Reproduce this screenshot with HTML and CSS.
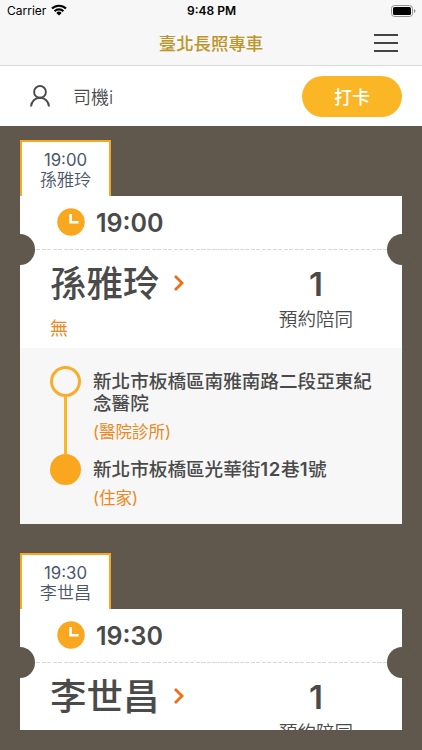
FILE: index.html
```html
<!DOCTYPE html>
<html lang="zh-Hant">
<head>
  <meta charset="UTF-8">
  <meta name="viewport" content="width=device-width, initial-scale=1.0">
  <title>臺北長照專車</title>
  <link rel="stylesheet" href="styles.css">
</head>
<body>
  <header class="header">
    <div class="status-bar">
      <div class="carrier">
        <span>Carrier</span>
        <svg class="wifi" width="16" height="12" viewBox="0 0 16 12">
          <path d="M1 4.6a10 10 0 0 1 14 0M3.6 7.2a6.3 6.3 0 0 1 8.8 0" fill="none" stroke="#000" stroke-width="2.1"/>
          <path d="M8 11.6L5.3 8.9a3.8 3.8 0 0 1 5.4 0z"/>
        </svg>
      </div>
      <span class="clock">9:48 PM</span>
      <svg class="battery" width="25" height="12" viewBox="0 0 25 12">
        <rect x=".5" y=".5" width="21" height="11" rx="3" fill="none" stroke="#929292"/>
        <rect x="2" y="2" width="18" height="8" rx="1.6"/>
        <path d="M23 4v4q1.4-.7 1.4-2T23 4z" fill="#888"/>
      </svg>
    </div>
    <div class="nav">
      <h1 class="nav-title">臺北長照專車</h1>
      <div class="menu-btn"><i></i><i></i><i></i></div>
    </div>
  </header>

  <div class="user-bar">
    <svg class="user-icon" width="20" height="22" viewBox="0 0 20 22" fill="none" stroke="#4a4a4a" stroke-width="1.9">
      <circle cx="10" cy="6.9" r="5.9"/>
      <path d="M1 21.5c.4-5 4-8.7 9-8.7s8.6 3.7 9 8.7"/>
    </svg>
    <span class="user-name">司機i</span>
    <button class="punch-btn">打卡</button>
  </div>

  <main class="list">
    <section class="ticket">
      <div class="tab"><span class="tab-time">19:00</span><span>孫雅玲</span></div>
      <div class="card">
        <div class="card-time">
          <svg class="time-icon" width="28" height="28" viewBox="0 0 28 28">
            <circle cx="14" cy="14" r="13.7" fill="#f9a71f"/>
            <path d="M13.6 6v8.3h8" fill="none" stroke="#fff" stroke-width="2.6"/>
          </svg>
          <span>19:00</span>
        </div>
        <div class="card-info">
          <div class="passenger">
            <div class="passenger-name">
              <span>孫雅玲</span>
              <svg width="12" height="16" viewBox="0 0 12 16"><path d="M2 1l7 7-7 7" fill="none" stroke="#ee6d10" stroke-width="2.8"/></svg>
            </div>
            <p class="note">無</p>
          </div>
          <div class="companion">
            <strong>1</strong>
            <span>預約陪同</span>
          </div>
        </div>
        <div class="route">
          <div class="route-line">
            <i class="dot"></i>
            <i class="line"></i>
            <i class="dot dot-end"></i>
          </div>
          <div class="stops">
            <div class="stop">
              <p class="address">新北市板橋區南雅南路二段亞東紀念醫院</p>
              <p class="kind">(醫院診所)</p>
            </div>
            <div class="stop">
              <p class="address">新北市板橋區光華街<b>12</b>巷<b>1</b>號</p>
              <p class="kind">(住家)</p>
            </div>
          </div>
        </div>
      </div>
    </section>

    <section class="ticket">
      <div class="tab"><span class="tab-time">19:30</span><span>李世昌</span></div>
      <div class="card">
        <div class="card-time">
          <svg class="time-icon" width="28" height="28" viewBox="0 0 28 28">
            <circle cx="14" cy="14" r="13.7" fill="#f9a71f"/>
            <path d="M13.6 6v8.3h8" fill="none" stroke="#fff" stroke-width="2.6"/>
          </svg>
          <span>19:30</span>
        </div>
        <div class="card-info">
          <div class="passenger">
            <div class="passenger-name">
              <span>李世昌</span>
              <svg width="12" height="16" viewBox="0 0 12 16"><path d="M2 1l7 7-7 7" fill="none" stroke="#ee6d10" stroke-width="2.8"/></svg>
            </div>
          </div>
          <div class="companion">
            <strong>1</strong>
            <span>預約陪同</span>
          </div>
        </div>
      </div>
    </section>
  </main>
</body>
</html>
```

FILE: styles.css
```css
* {
  box-sizing: border-box;
}

body {
  margin: 0;
  height: 750px;
  overflow: hidden;
  background: #60574d;
  color: #4a4a4a;
  font-family: Inter, "Noto Sans CJK TC", sans-serif;
}

p,
h1 {
  margin: 0;
}

.header {
  height: 66px;
  background: #f7f7f7;
  border-bottom: 1px solid #dadada;
}

.status-bar {
  display: grid;
  grid-template-columns: 1fr auto 1fr;
  align-items: center;
  height: 21px;
  padding: 0 6px 0 7px;
  font-size: 12px;
  line-height: 21px;
  color: #000;
}

.carrier {
  display: flex;
  align-items: center;
  gap: 5px;
}

.carrier svg {
  margin-bottom: 1px;
}

.clock {
  font-weight: 600;
}

.battery {
  justify-self: end;
}

.nav {
  display: grid;
  grid-template-columns: 1fr auto 1fr;
  align-items: center;
  height: 44px;
  padding-right: 24px;
  padding-left: 24px;
}

.nav-title {
  grid-column: 2;
  padding-top: 1px;
  font-size: 17.4px;
  font-weight: 500;
  line-height: 24px;
  color: #bd962b;
}

.menu-btn {
  justify-self: end;
  display: flex;
  flex-direction: column;
  justify-content: space-between;
  width: 24px;
  height: 18px;
}

.menu-btn i {
  height: 2px;
  background: #444;
}

.user-bar {
  display: flex;
  align-items: center;
  height: 60px;
  padding: 0 20px 0 30px;
  background: #fff;
}

.user-name {
  margin-left: 23px;
  font-size: 18px;
  font-weight: 350;
}

.punch-btn {
  width: 100px;
  height: 41px;
  margin-left: auto;
  border: 0;
  border-radius: 21px;
  background: #fbb626;
  color: #fff;
  font-family: inherit;
  font-size: 18px;
  font-weight: 500;
}

.list {
  height: 604px;
  padding: 14px 20px 0;
  overflow: hidden;
}

.ticket {
  margin-bottom: 29px;
}

.tab {
  display: flex;
  flex-direction: column;
  width: 91px;
  height: 56px;
  padding-top: 8px;
  border: 2px solid #f9a71f;
  border-bottom: 0;
  background: #fff;
  color: #4b566b;
  font-size: 17.2px;
  font-weight: 350;
  line-height: 20px;
  text-align: center;
}

.tab-time {
  font-size: 16.8px;
  font-weight: 400;
}

.card {
  position: relative;
  background: #fff;
}

/* ticket notches */
.card::before,
.card::after {
  content: "";
  position: absolute;
  top: 38px;
  left: -15px;
  width: 30px;
  height: 31px;
  border-radius: 50%;
  background: #60574d;
}

.card::after {
  right: -15px;
  left: auto;
}

.card-time {
  display: flex;
  align-items: center;
  gap: 11px;
  height: 54px;
  padding-left: 37px;
  background: repeating-linear-gradient(90deg, #d8d8d8 0 4px, #fff 4px 5.5px) bottom / 100% 1px no-repeat;
  font-size: 25px;
  font-weight: 600;
}

.time-icon {
  margin-bottom: 2px;
}

.card-info {
  display: flex;
  height: 98px;
  padding-left: 30px;
}

.passenger {
  width: 180px;
}

.passenger-name {
  display: flex;
  align-items: center;
  gap: 13px;
  height: 67px;
  font-size: 36.5px;
  font-weight: 500;
  line-height: 68px;
}

.passenger-name svg {
  margin-bottom: 2px;
}

.note {
  font-size: 18px;
  line-height: 24px;
  color: #ee871b;
}

.companion {
  display: flex;
  flex-direction: column;
  align-items: center;
  width: 172px;
  padding-top: 14px;
}

.companion strong {
  font-size: 33px;
  font-weight: 600;
  line-height: 40px;
}

.companion span {
  margin-top: 2px;
  font-size: 18.6px;
  font-weight: 350;
  line-height: 26px;
}

.route {
  display: flex;
  gap: 12px;
  height: 176px;
  padding: 18px 20px 0 30px;
  background: #f7f7f7;
}

.route-line {
  display: flex;
  flex-direction: column;
  align-items: center;
  width: 31px;
}

.dot {
  width: 31px;
  height: 31px;
  border: 3px solid #f9ad2b;
  border-radius: 50%;
}

.dot-end {
  border-color: #f9a71f;
  background: #f9a71f;
}

.line {
  width: 3px;
  height: 57px;
  background: #fbb626;
}

.stops {
  flex: 1;
  margin-right: -5px;
  padding-top: 4px;
}

.stop {
  margin-bottom: 13px;
}

.address {
  font-size: 18.6px;
  font-weight: 500;
  line-height: 22px;
}

.address b {
  font-weight: 600;
  letter-spacing: .6px;
}

.kind {
  margin-top: 6px;
  font-size: 16.5px;
  font-weight: 400;
  line-height: 25px;
  color: #ee871b;
}
```
